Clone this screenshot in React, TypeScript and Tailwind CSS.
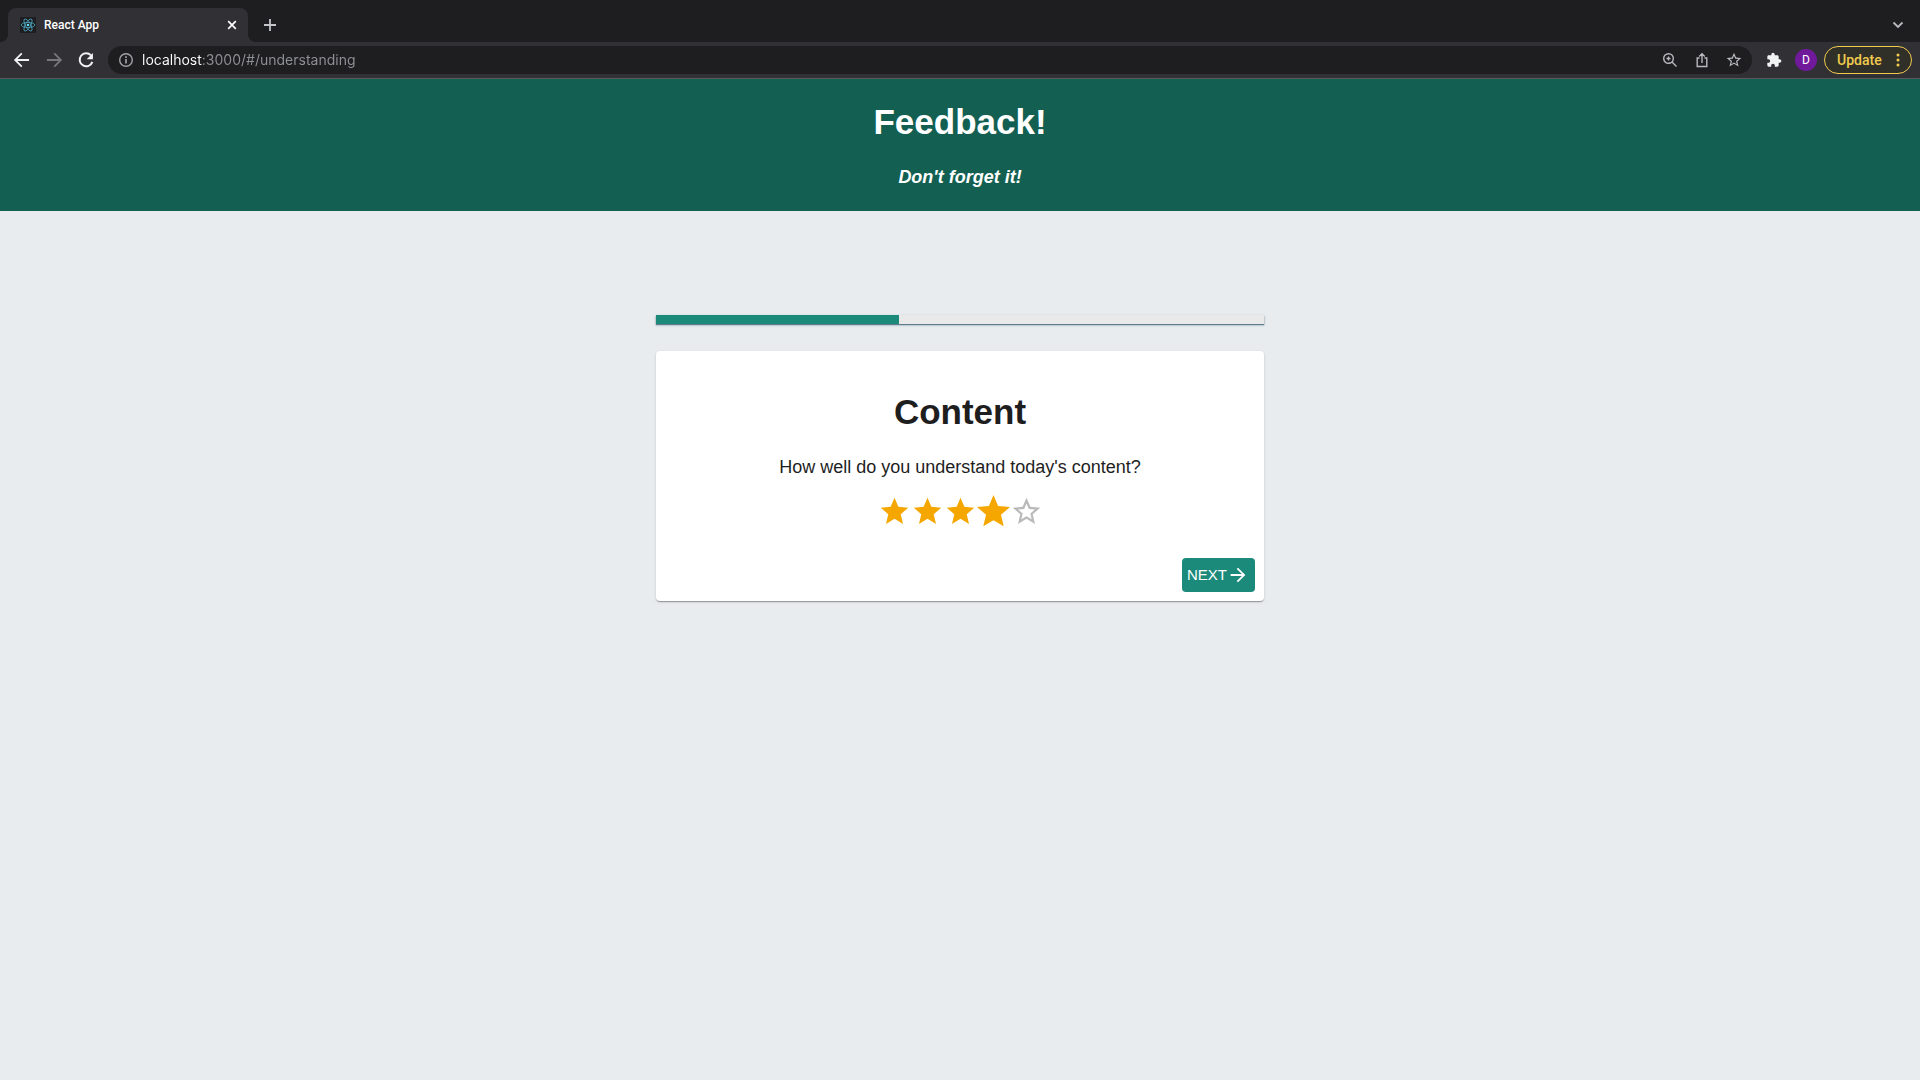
import { useState } from "react";

const STAR =
  "M12 17.27 18.18 21l-1.64-7.03L22 9.24l-7.19-.61L12 2 9.19 8.63 2 9.24l5.46 4.73L5.82 21z";
const STAR_OUTLINE =
  "m22 9.24-7.19-.62L12 2 9.19 8.63 2 9.24l5.46 4.73L5.82 21 12 17.27 18.18 21l-1.63-7.03zM12 15.4l-3.76 2.27 1-4.28-3.32-2.88 4.38-.38L12 6.1l1.71 4.04 4.38.38-3.32 2.88 1 4.28z";

function Icon({ d, className }: { d: string; className: string }) {
  return (
    <svg viewBox="0 0 24 24" fill="currentColor" aria-hidden="true" className={className}>
      <path d={d} />
    </svg>
  );
}

function ReactLogo() {
  return (
    <svg viewBox="0 0 16 16" fill="none" aria-hidden="true" className="size-4 shrink-0">
      <rect width="16" height="16" rx="1" fill="#1d1e20" />
      <g stroke="#4fa6c0" strokeWidth="0.8">
        <ellipse cx="8" cy="8" rx="6.8" ry="2.6" />
        <ellipse cx="8" cy="8" rx="6.8" ry="2.6" transform="rotate(60 8 8)" />
        <ellipse cx="8" cy="8" rx="6.8" ry="2.6" transform="rotate(120 8 8)" />
      </g>
      <circle cx="8" cy="8" r="1.3" fill="#61dafb" />
    </svg>
  );
}

function TabStrip() {
  return (
    <div className="flex h-[42px] items-end bg-[#1e1e20] pl-2">
      <div className="relative flex h-[34px] w-60 items-center rounded-t-lg bg-[#303035] pr-2 pl-3">
        <span className="absolute bottom-0 -left-2 size-2 bg-[radial-gradient(circle_at_0_0,#1e1e20_8px,#303035_8px)]" />
        <span className="absolute -right-2 bottom-0 size-2 bg-[radial-gradient(circle_at_100%_0,#1e1e20_8px,#303035_8px)]" />
        <ReactLogo />
        <span className="ml-2 flex-1 text-[12px] font-medium text-white">React App</span>
        <button type="button" aria-label="Close tab" className="flex size-4 items-center justify-center text-white">
          <svg viewBox="0 0 16 16" aria-hidden="true" className="size-4" stroke="currentColor" strokeWidth="1.7">
            <path d="M4.2 4.2l7.6 7.6M11.8 4.2l-7.6 7.6" />
          </svg>
        </button>
      </div>
      <button type="button" aria-label="New tab" className="ml-3 flex h-[34px] w-5 items-center justify-center text-[#c4c5c9]">
        <svg viewBox="0 0 16 16" aria-hidden="true" className="size-4" stroke="currentColor" strokeWidth="1.8">
          <path d="M8 2v12M2 8h12" />
        </svg>
      </button>
      <button type="button" aria-label="Search tabs" className="mr-[14px] ml-auto flex h-[34px] w-4 items-center justify-center text-[#b9babe]">
        <svg viewBox="0 0 16 16" aria-hidden="true" className="size-4" fill="none" stroke="currentColor" strokeWidth="1.8">
          <path d="M3.5 5.5 8 10l4.5-4.5" />
        </svg>
      </button>
    </div>
  );
}

function Toolbar() {
  return (
    <div className="flex h-[37px] items-center border-b border-[#59595d] bg-[#303035] pr-2 pl-3">
      <button type="button" aria-label="Back" className="size-5 text-[#f1f2f4]">
        <Icon className="size-5" d="M20.500 10.800H6.500l6-6L11 3.300 2.300 12l8.700 8.700 1.500-1.500-6-6h14z" />
      </button>
      <button type="button" aria-label="Forward" disabled className="ml-3 size-5 text-[#77787c]">
        <Icon className="size-5" d="M3.500 10.800h14l-6-6L13 3.300l8.700 8.700-8.700 8.700-1.500-1.500 6-6h-14z" />
      </button>
      <button type="button" aria-label="Reload" className="ml-3 size-5 text-[#f1f2f4]">
        <svg viewBox="0 0 24 24" aria-hidden="true" className="size-5" fill="none" stroke="currentColor" strokeWidth="2.4">
          <path d="M18 6.500A7.800 7.800 0 1 0 19.600 14.200" />
          <path d="M20.300 3.500V11h-7.500z" fill="currentColor" stroke="none" />
        </svg>
      </button>
      <div className="ml-3 flex h-7 flex-1 items-center rounded-full bg-[#1e1e20] px-[10px] text-[#b9babe]">
        <svg viewBox="0 0 16 16" aria-hidden="true" className="size-4 shrink-0 text-[#a0a2a7]" fill="none" stroke="currentColor" strokeWidth="1.4">
          <circle cx="8" cy="8" r="6.300" />
          <path d="M8 7v4.500M8 4.300v1.600" strokeWidth="1.700" />
        </svg>
        <input
          aria-label="Address"
          defaultValue="localhost:3000/#/understanding"
          className="ml-2 h-5 min-w-0 flex-1 bg-[linear-gradient(to_right,#ffffff_60px,#909195_60px)] bg-clip-text font-[Inter,sans-serif] text-[14px] leading-5 text-transparent outline-none"
        />
        <button type="button" aria-label="Zoom" className="size-4">
          <svg viewBox="0 0 16 16" aria-hidden="true" className="size-4" fill="none" stroke="currentColor" strokeWidth="1.4">
            <circle cx="6.500" cy="6.500" r="4.800" />
            <path d="M10 10l4.500 4.500M6.500 4.500v4M4.500 6.500h4" />
          </svg>
        </button>
        <button type="button" aria-label="Share" className="ml-4 size-4">
          <svg viewBox="0 0 16 16" aria-hidden="true" className="size-4" fill="none" stroke="currentColor" strokeWidth="1.4">
            <path d="M5.500 6H3.200v8.500h9.600V6h-2.300M8 11V2M5.200 4.500 8 1.700l2.800 2.800" />
          </svg>
        </button>
        <button type="button" aria-label="Bookmark" className="ml-4 size-4">
          <Icon className="size-4 scale-110" d={STAR_OUTLINE} />
        </button>
      </div>
      <button type="button" aria-label="Extensions" className="ml-[14px] size-4 text-[#f1f2f4]">
        <Icon
          className="size-4"
          d="M20.500 11H19V7c0-1.100-.9-2-2-2h-4V3.500C13 2.120 11.880 1 10.500 1S8 2.120 8 3.500V5H4c-1.100 0-1.990.9-1.990 2v3.800H3.500c1.490 0 2.700 1.210 2.700 2.700s-1.210 2.700-2.700 2.700H2V20c0 1.100.9 2 2 2h3.800v-1.500c0-1.490 1.210-2.700 2.700-2.700 1.490 0 2.700 1.210 2.700 2.700V22H17c1.100 0 2-.9 2-2v-4h1.500c1.380 0 2.500-1.120 2.500-2.500S21.880 11 20.500 11z"
        />
      </button>
      <button
        type="button"
        aria-label="Profile D"
        className="ml-[13px] flex size-[22px] items-center justify-center rounded-full bg-[#701a9b] text-[12px] text-white"
      >
        D
      </button>
      <button
        type="button"
        className="ml-[7px] flex h-7 w-[88px] items-center rounded-full border border-[#f2cb4e] bg-[#303029] pl-3 text-[14px] font-medium text-[#f2cb4e]"
      >
        Update
        <svg viewBox="0 0 4 14" fill="currentColor" aria-hidden="true" className="mr-[11px] ml-auto h-[14px] w-1">
          <circle cx="2" cy="2" r="1.500" />
          <circle cx="2" cy="7" r="1.500" />
          <circle cx="2" cy="12" r="1.500" />
        </svg>
      </button>
    </div>
  );
}

function StarRating() {
  const [value, setValue] = useState(4);
  return (
    <div role="radiogroup" aria-label="Understanding" className="mt-[18px] flex justify-center">
      {[1, 2, 3, 4, 5].map((n) => (
        <label key={n} className="relative size-[33px] cursor-pointer">
          <input
            type="radio"
            name="understanding"
            aria-label={`${n} stars`}
            value={n}
            checked={value === n}
            onChange={() => setValue(n)}
            className="absolute inset-0 z-10 size-full cursor-pointer opacity-0"
          />
          <Icon
            d={n <= value ? STAR : STAR_OUTLINE}
            className={
              n === value
                ? "size-[33px] scale-120 text-[#f5a700]"
                : n < value
                  ? "size-[33px] text-[#f5a700]"
                  : "size-[33px] text-[#bababa]"
            }
          />
        </label>
      ))}
    </div>
  );
}

export default function App() {
  return (
    <div className="flex min-h-screen flex-col bg-[#e8ecef] font-['Liberation_Sans',Arial,sans-serif]">
      <div className="font-[Roboto,Inter,sans-serif]">
        <TabStrip />
        <Toolbar />
      </div>

      <header className="bg-[#135f52] pt-[23px] pb-6 text-center text-white">
        <h1 className="text-[35px] leading-10 font-bold">Feedback!</h1>
        <h4 className="mt-[25px] text-[18px] leading-5 font-bold italic">Don't forget it!</h4>
      </header>

      <main className="mx-auto mt-26 w-full max-w-[608px] text-[#1e1e1e]">
        <div
          role="progressbar"
          aria-label="Survey progress"
          aria-valuenow={40}
          className="h-[9px] bg-[#e9e9e9] shadow-[0_1px_1px_0_#607d8b,0_1px_3px_0_#b0bec5]"
        >
          <div className="h-full w-2/5 bg-[#1c8a7a]" />
        </div>

        <section className="mt-[27px] rounded bg-white px-[9px] pt-[41px] pb-[9px] text-center shadow-[0_2px_1px_-1px_rgba(0,0,0,0.2),0_1px_1px_0_rgba(0,0,0,0.14),0_1px_3px_0_rgba(0,0,0,0.12)]">
          <h1 className="text-[35px] leading-10 font-bold">Content</h1>
          <p className="mt-[25px] text-[18px] leading-5">How well do you understand today's content?</p>
          <StarRating />
          <div className="mt-[30px] flex justify-end">
            <button
              type="button"
              className="flex h-[34px] w-[73px] items-center rounded bg-[#1c8a7a] pl-[5px] text-[15px] text-white"
            >
              NEXT
              <Icon className="size-[22px] shrink-0" d="m12 4-1.410 1.410L16.170 11H4v2h12.170l-5.580 5.590L12 20l8-8z" />
            </button>
          </div>
        </section>
      </main>
    </div>
  );
}
